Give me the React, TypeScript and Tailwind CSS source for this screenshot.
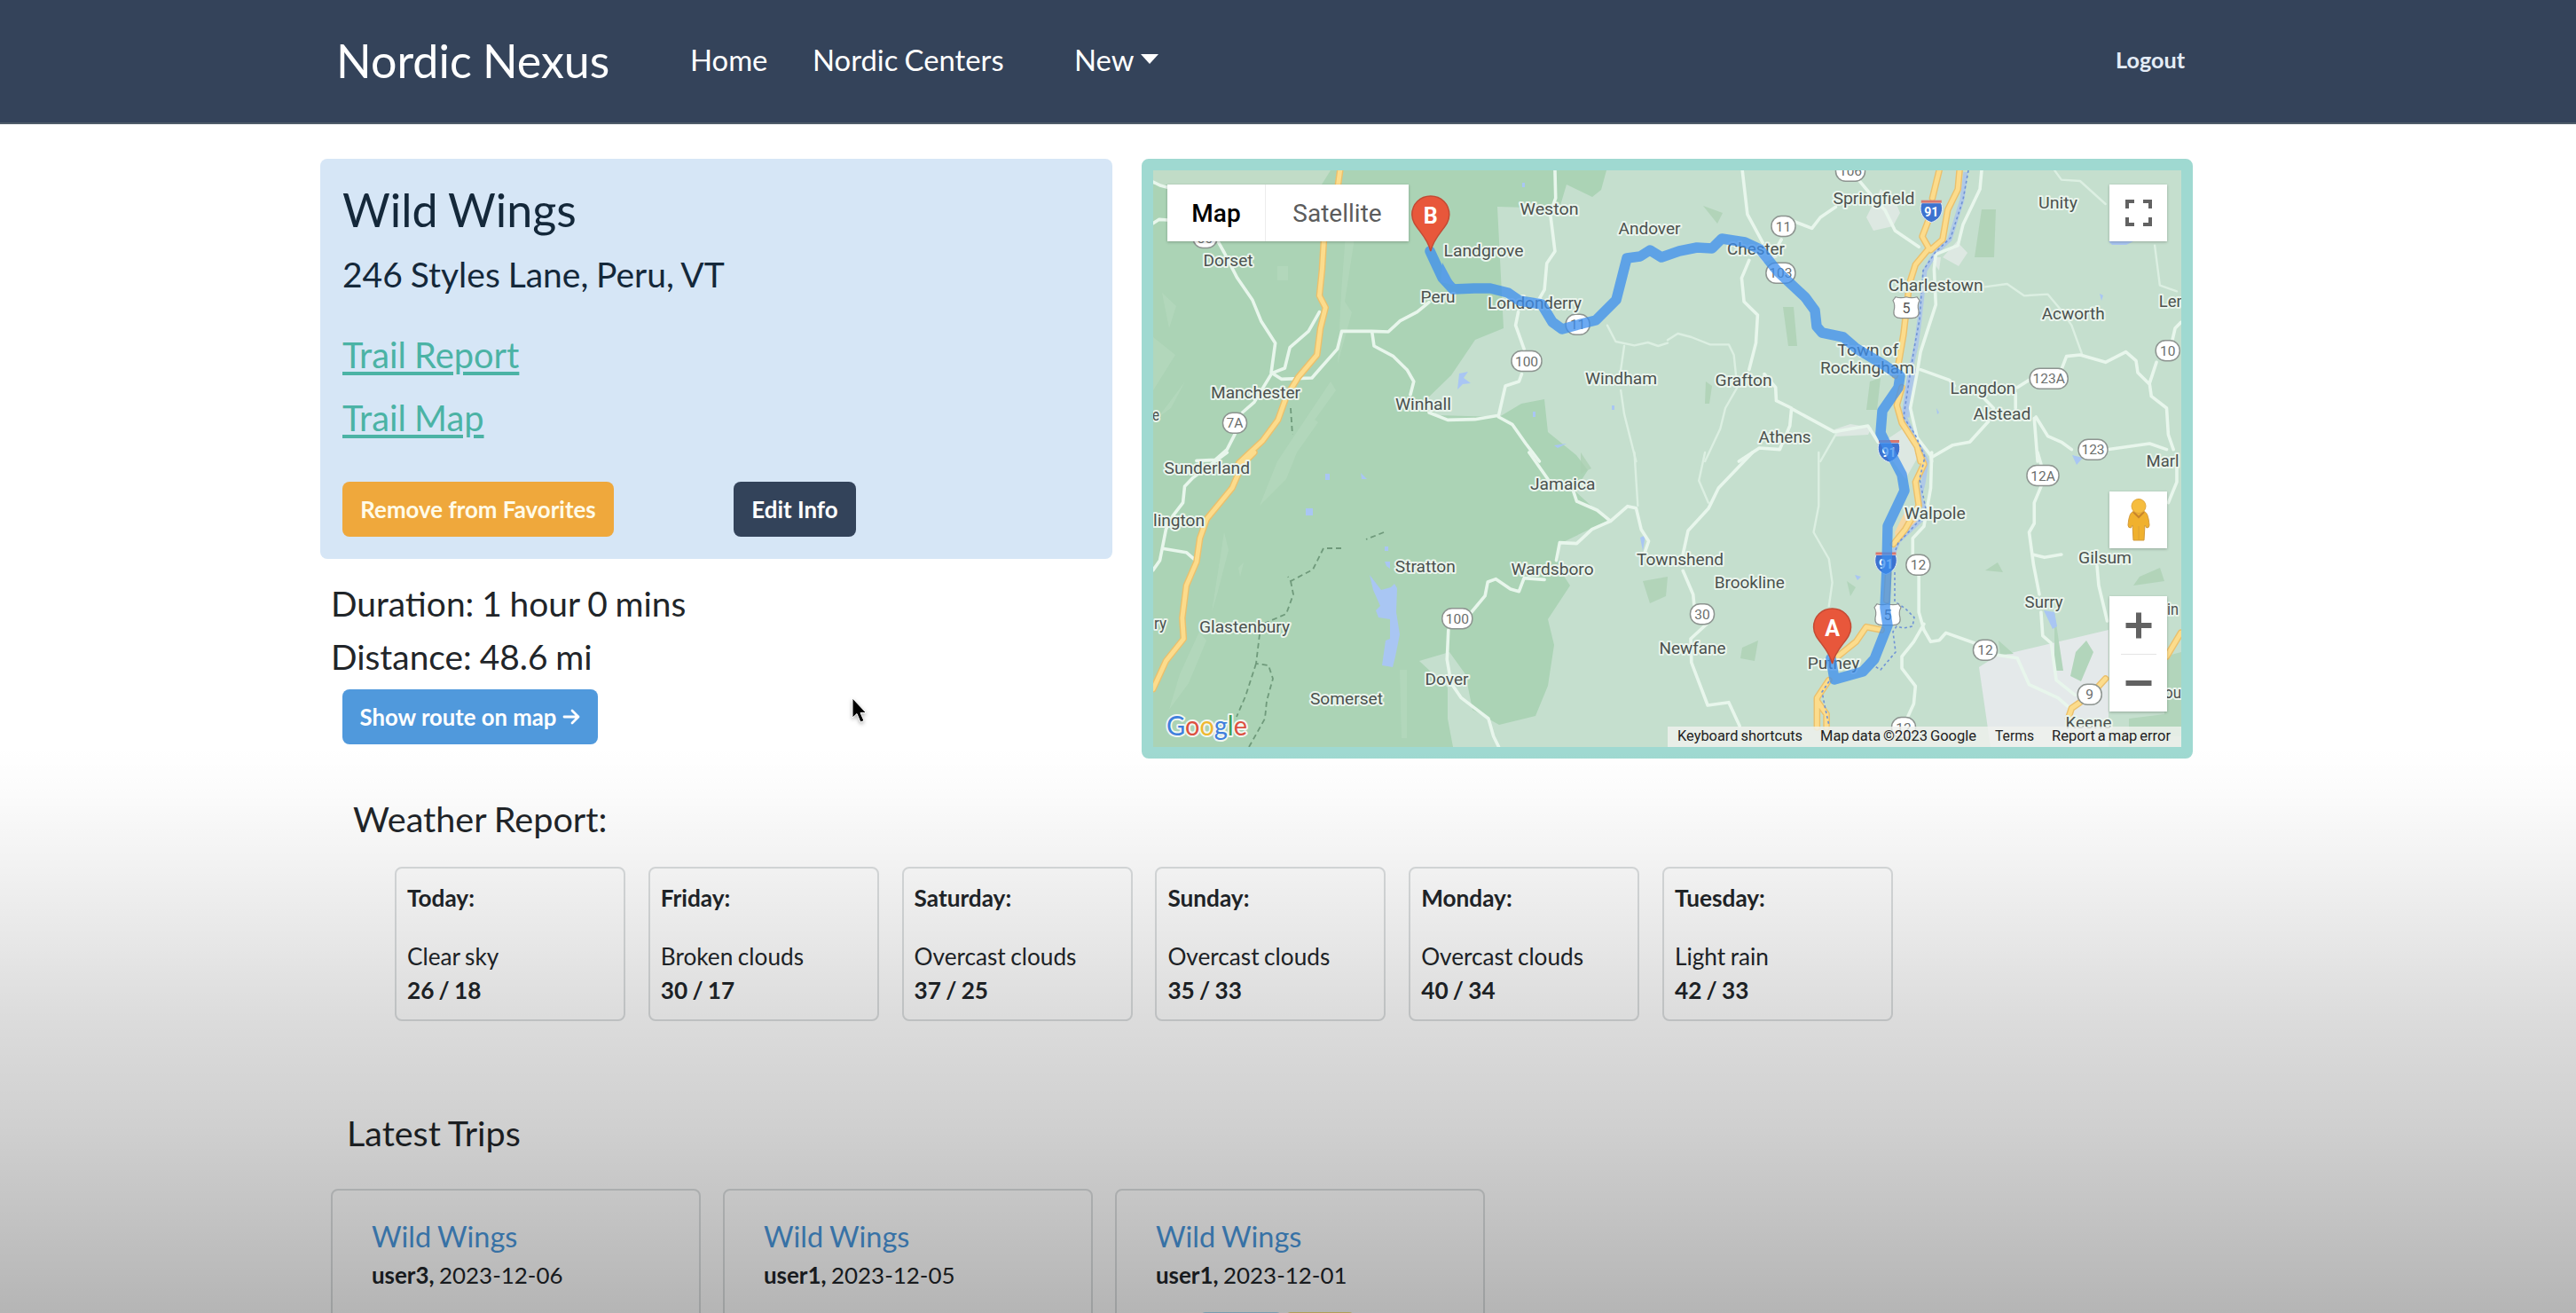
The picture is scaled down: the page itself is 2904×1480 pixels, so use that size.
import type { ReactNode } from "react";

const forecast = [
  ["Today:", "Clear sky", "26 / 18"],
  ["Friday:", "Broken clouds", "30 / 17"],
  ["Saturday:", "Overcast clouds", "37 / 25"],
  ["Sunday:", "Overcast clouds", "35 / 33"],
  ["Monday:", "Overcast clouds", "40 / 34"],
  ["Tuesday:", "Light rain", "42 / 33"],
];

const trips = [
  { user: "user3,", date: "2023-12-06", tags: false },
  { user: "user1,", date: "2023-12-05", tags: false },
  { user: "user1,", date: "2023-12-01", tags: true },
];

// name, left, baseline, width
const towns: [string, number, number, number][] = [
  ["Dorset", 1356.5, 300, 56],
  ["Manchester", 1365, 449, 101],
  ["Winhall", 1573, 461.7, 63],
  ["Peru", 1601.5, 341, 39],
  ["Landgrove", 1627.5, 289, 90],
  ["Londonderry", 1677, 347.7, 106],
  ["Weston", 1713.5, 241.7, 66],
  ["Windham", 1787, 433.3, 81],
  ["Andover", 1824.5, 264.3, 70],
  ["e", 1299, 474, 8],
  ["Springfield", 2066.4, 230, 92],
  ["Chester", 1947, 286.7, 65],
  ["Charlestown", 2128.7, 327.7, 107],
  ["Unity", 2298, 235, 44],
  ["Acworth", 2301.7, 360, 71],
  ["Lem", 2433.7, 346, 36],
  ["Town of", 2071.3, 400.7, 69],
  ["Rockingham", 2052, 420.7, 106],
  ["Grafton", 1933.6, 435, 64],
  ["Athens", 1982.6, 499, 59],
  ["Langdon", 2198.4, 444, 74],
  ["Alstead", 2224.4, 472.7, 65],
  ["Marl", 2419.6, 525.7, 37],
  ["Sunderland", 1312.5, 534, 96.5],
  ["lington", 1300, 592.7, 58],
  ["ry", 1301, 709, 14],
  ["Glastenbury", 1352, 713.3, 102],
  ["Somerset", 1477, 794, 82],
  ["Stratton", 1572.8, 645, 68],
  ["Dover", 1606.5, 771.7, 49],
  ["Wardsboro", 1703.6, 648.3, 93],
  ["Jamaica", 1725, 552.3, 73.5],
  ["Townshend", 1845, 637.3, 98],
  ["Brookline", 1932.7, 662.7, 79],
  ["Newfane", 1870.5, 737.3, 75],
  ["Putney", 2037.7, 754, 58.5],
  ["Walpole", 2146.7, 585, 69],
  ["Gilsum", 2343, 635, 60],
  ["Surry", 2282.6, 685, 43],
  ["Keene", 2328.5, 821, 52],
  ["in", 2443, 692.7, 13],
  ["ou", 2440, 786.7, 19],
];

// number, centre x, centre y, width
const routes: [string, number, number, number][] = [
  ["30", 1358.5, 268, 27],
  ["7A", 1392, 476.7, 27],
  ["100", 1721, 407, 34],
  ["11", 1778.6, 365.7, 27],
  ["106", 2086, 192.7, 33],
  ["11", 2010.5, 255, 27],
  ["103", 2007.4, 307.7, 33],
  ["123A", 2309.7, 426.7, 43],
  ["10", 2443.7, 395.3, 27],
  ["123", 2359.5, 506.7, 33],
  ["100", 1642.8, 697.3, 34],
  ["12A", 2303, 536, 36],
  ["12", 2162.4, 636.7, 27],
  ["30", 1919, 692.3, 27],
  ["12", 2238, 732.7, 27],
  ["9", 2355.7, 782.7, 27],
  ["12", 2146, 820, 27],
];

const credits: [string, number, number][] = [
  ["Keyboard shortcuts", 1891, 141],
  ["Map data ©2023 Google", 2052, 176],
  ["Terms", 2249, 44],
  ["Report a map error", 2313, 134],
];

// The four survey sheets that the map's lines are plotted on.
const sheet = {
  nw: "translate(1280 170) scale(.38265 .33333)",
  ne: "translate(1880 170) scale(.38265 .33333)",
  sw: "translate(1280 510) scale(.38265 .33333)",
  se: "translate(1880 510) scale(.38265 .33333)",
};

const whiteRoads: [keyof typeof sheet, string][] = [
  ["nw", "M52 105L75 118L100 125M52 245L70 232L95 234M245 310L262 345L300 430L345 505L370 575L412 650L400 750L430 772L520 768L545 735L595 670L608 610L695 610L745 612L780 575L830 545L865 512"],
  ["nw", "M542 545L510 610L455 665L440 735L402 752L350 850L315 885M293 958L270 1010L235 1045L180 1048"],
  ["nw", "M1236 66L1238 160L1222 210L1236 340L1212 380L1205 470L1190 500M1128 545L1120 590L1145 670M1138 755L1130 780L1090 795L1070 895L1000 908L920 910L865 885"],
  ["nw", "M697 612L703 660L760 695L800 740L820 780L810 825M1070 900L1110 925L1150 990L1190 1050"],
  ["sw", "M1160 0L1215 90M1290 130L1300 165L1360 195L1400 232L1345 260L1300 308L1250 305L1240 365M1400 232L1450 182L1475 188L1490 260L1512 300L1500 340"],
  ["sw", "M1205 430L1145 425L1130 470L1105 462L1062 428L1038 438L1030 485L990 540M922 600L918 700L930 780L960 830L1040 900L1055 960L1070 995"],
  ["sw", "M270 0L170 85L145 115L140 170L110 215L90 260L78 330L72 365L52 398M80 325L150 338L180 368"],
  ["ne", "M220 66L235 215L280 310M240 370L218 430L225 510L265 555L260 650L240 740M335 300L325 320M375 240L425 262L450 225L495 190"],
  ["ne", "M560 95L600 150L640 200L670 270L740 325M925 66L920 130L870 250L855 320L790 350L785 400L790 520L745 680L735 750L715 870L735 970L775 1030L778 1050"],
  ["ne", "M285 755L318 800L320 845L365 870L360 930L330 1010L270 1005L210 1050M370 875L490 950L590 930L620 985"],
  ["ne", "M745 740L830 775L845 795M1030 800L1065 775M1160 740L1175 695L1215 690L1290 715L1350 680L1380 710L1385 750L1420 790L1425 830L1470 870L1475 960L1490 1010M1420 785L1440 715M1485 650L1495 600L1512 580"],
  ["ne", "M1025 820V870M930 835L960 870M1085 900L1120 965L1160 985L1190 1010M1295 1010L1420 990L1470 1010M1080 905L1090 1050M945 915L890 985L840 995L780 1035"],
  ["se", "M250 0L150 120L120 190L60 265L45 345M45 400L75 480L78 515M115 580L68 630L70 710L118 855L180 845L212 925"],
  ["se", "M778 0L775 120L755 250L722 290L722 345M740 410L740 540L755 600L775 640L800 635L820 610L905 645M755 580L725 640L690 690L690 730L730 790L725 850L705 900"],
  ["se", "M1090 0L1100 40M1100 115L1080 170L1080 240L1065 270L1078 380L1095 480M1100 540L1105 620L1130 645L1145 770L1200 820M970 685L1030 695L1065 785L1150 830L1180 860M1500 40V100L1475 170M1265 385L1270 450L1295 570M1075 345L1110 355L1160 345"],
];

const thinRoads: [keyof typeof sheet, string][] = [
  ["nw", "M1390 590L1415 645L1470 658L1510 648L1540 660L1568 650M1440 660L1430 740M1430 810L1440 890L1475 1050"],
  ["ne", "M0 640L30 618L70 630L125 655L180 655L195 690L205 800L170 870L155 940L110 1050"],
  ["ne", "M1140 66L1160 98L1215 102L1290 180M935 460L1000 450L1050 490L1120 485L1160 540L1190 590L1220 685M1435 320L1450 455L1500 475M500 950L450 1050"],
  ["se", "M445 0L445 180L430 270L475 360L485 440L475 520M110 0L92 95L120 170"],
  ["sw", "M1470 0L1480 180"],
];

const mainRoads: [keyof typeof sheet, string][] = [
  ["nw", "M603 66L597 115M555 305L550 400L542 490L560 530L545 600L535 690L480 765L445 830L420 910L375 980L305 1055"],
  ["sw", "M350 0L315 40L285 120L210 225L190 290L180 370L150 450L138 560L142 630L90 705L52 800"],
  ["ne", "M800 66L780 160M770 230L750 290L770 330L730 385L712 450L695 620L680 720L670 760M860 66L855 130L825 200L810 300L775 335"],
  ["ne", "M690 800L675 860L690 920L735 1000L745 1050"],
  ["se", "M740 0L755 40L730 100L740 180L700 260L665 310M650 400L645 500M630 600L585 590L555 640L490 700M475 770L440 830V930M440 840L468 885V930M1512 610L1470 690M1290 765L1270 790M1215 845L1190 865L1180 900"],
];

function Lines({ data, stroke, width }: { data: [keyof typeof sheet, string][]; stroke: string; width: number }) {
  return (
    <>
      {data.map(([s, d], i) => (
        <g key={i} transform={sheet[s]}>
          <path d={d} fill="none" stroke={stroke} strokeWidth={width} strokeLinejoin="round" strokeLinecap="round" vectorEffect="non-scaling-stroke" />
        </g>
      ))}
    </>
  );
}

function Interstate({ x, y }: { x: number; y: number }) {
  return (
    <g transform={`translate(${x} ${y})`}>
      <path d="M-11 -9H11C14 -2 12 9 0 13C-12 9 -14 -2 -11 -9Z" fill="#3d72cf" stroke="#e9eef6" strokeWidth="1" />
      <path d="M-11.5 -12H11.5V-9H-11.5Z" fill="#d7776f" />
      <text y="6.5" textAnchor="middle" fontSize="14" fontWeight="700" fill="#fff">91</text>
    </g>
  );
}

function UsRoute({ x, y }: { x: number; y: number }) {
  return (
    <g transform={`translate(${x} ${y})`}>
      <path d="M-12 -12Q-6 -10 0 -12Q6 -10 12 -12L15 -8Q12 -3 14 4Q15 12 6 12H-6Q-15 12 -14 4Q-12 -3 -15 -8Z" fill="#fff" stroke="#8b8f8d" strokeWidth="1.2" />
      <text y="6" textAnchor="middle" fontSize="16" fill="#555">5</text>
    </g>
  );
}

function Pin({ x, y, letter }: { x: number; y: number; letter: string }) {
  return (
    <g transform={`translate(${x} ${y})`}>
      <path d="M0 -62C-12 -62 -21 -53 -21 -41C-21 -27 -5 -20 0 0C5 -20 21 -27 21 -41C21 -53 12 -62 0 -62Z" fill="#e8573b" stroke="#c34a34" strokeWidth="1.5" />
      <text y="-31.5" textAnchor="middle" fontSize="25" fontWeight="700" fill="#fff">{letter}</text>
    </g>
  );
}

function RouteMap() {
  return (
    <svg viewBox="1300 192 1159 650" className="block h-[650px] w-[1159px]" fontFamily="Roboto, sans-serif">
      <rect x="1300" y="192" width="1159" height="650" fill="#c5dfce" />
      <path d="M1300 192H1811L1805 214L1795 222L1766 208L1758 235L1688 233L1695 370L1663 383L1636 423L1605 453L1620 468L1690 470L1715 455L1741 450L1745 487L1777 513L1790 530L1775 553L1812 587L1758 613L1757 640L1770 660L1745 698L1752 727L1745 773L1731 807L1690 817L1660 800L1652 760L1634 735L1600 745L1632 775L1632 810L1638 842H1300Z" fill="#abd3b5" />
      {/* valley floor and lighter ridges */}
      <g fill="#b8dac0" opacity=".6">
        <path d="M1300 192H1500L1490 208H1300Z" fill="#d0e2d3" />
        <path d="M1518 250L1528 262L1516 340L1524 352L1508 410L1512 330ZM1500 430L1506 440L1470 490L1450 540L1420 570L1440 520ZM1380 600L1385 620L1372 670L1366 690ZM1352 712L1360 722L1340 770L1318 800L1330 760ZM1300 380L1325 400L1300 440ZM1440 300H1452V316H1440ZM1310 330L1326 345L1318 370ZM1478 470L1486 476L1462 510ZM1396 640L1402 634L1398 650ZM1578 755H1586V832H1580ZM1336 430L1320 460L1306 470Z" />
      </g>
      <g fill="#a9cfb1" opacity=".7">
        <path d="M2234 236H2250L2248 290H2226ZM1852 655L1880 650L1878 672L1860 680ZM2412 650L2435 640L2440 655L2405 660ZM2252 634L2258 645L2238 643ZM1964 730L1982 722L1978 745L1962 742ZM2010 346H2022L2026 390H2016ZM2108 430L2120 426L2116 462H2104ZM1923 430L1930 435L1927 455H1922ZM1782 510L1794 528L1782 534ZM1920 232L1942 240L1936 252Z" />
      </g>
      <path d="M2231 752L2250 740L2377 710V842H2244Z" fill="#e4e9ea" />
      <path d="M2316 690L2326 756H2316ZM2352 722L2360 735L2346 768L2334 762L2340 735ZM2440 740L2459 735V830H2400V810L2440 805ZM2253 722L2270 737L2255 738ZM2082 655L2092 662L2086 672Z" fill="#b2d5bb" />
      <g fill="#dde8e2">
        <path d="M2104 245L2120 213L2136 225L2142 240L2134 255L2112 260ZM2190 290L2206 272L2218 285L2208 300ZM2176 290L2188 290L2186 305ZM2120 500L2150 480L2165 510L2148 540ZM2068 484L2086 478L2110 482L2106 490L2070 492Z" />
        <path d="M1980 285L1990 275L2004 290L1988 296Z" />
      </g>
      <path d="M2136 600L2150 572L2162 588L2138 612Z" fill="#f6d7a1" />
      {/* lakes */}
      <g fill="#a9c6f3">
        <path d="M1548 665L1544 648L1557 665L1568 662L1572 658L1575 663L1574 690L1578 715L1573 740L1570 752L1558 750L1562 722L1567 720V698L1554 696L1551 688L1556 683Z" />
        <path d="M1494 534h5v7h-5zM1534 533l7 7h-6zM1472 573h8v8h-8zM1561 616h4v5h-4zM1561 633h6v8l-4-3zM1645 421l10-2-5 7 8 6-9 1-6 6zM1728 464h3v6h-3zM1752 502l14-2-10 5zM1817 457h3v5h-3zM1716 206h3v5h-3zM1849 606l6-3-3 18zM2304 688l12 2 3 16-5 3zM2336 513l12 3-7 8zM2091 648l7 2-4 4zM2367 331l4 2-2 6zM2183 460l3 5-2 2zM2377 272h28l-8 4h-16z" />
      </g>
      {/* river */}
      <path d="M2216 194L2212 225L2198 270L2182 285L2170 305L2164 360L2160 390L2153 420L2147 470L2160 495L2172 520L2168 545L2164 560L2172 580L2140 610L2134 625" fill="none" stroke="#a9c3ee" strokeWidth="5" opacity=".8" />
      <path d="M2156 415L2148 470" fill="none" stroke="#a9c3ee" strokeWidth="9" opacity=".8" />
      {/* hiking trails */}
      <path d="M1560 600L1540 608M1512 618L1492 618L1480 642L1455 655L1452 650M1455 655L1458 670L1450 692L1420 705M1420 715L1416 748L1430 750L1435 765L1428 790L1426 810L1408 842M1416 748L1404 785L1394 808M1455 460L1457 490" fill="none" stroke="#6f9a7b" strokeWidth="1.8" strokeDasharray="6 4" />
      <Lines data={thinRoads} stroke="#dcefe2" width={2.4} />
      <Lines data={whiteRoads} stroke="#e8f6ec" width={3.6} />
      <Lines data={mainRoads} stroke="#ebc06c" width={7.6} />
      <Lines data={mainRoads} stroke="#fcdc8c" width={4.8} />
      <path d="M2219 192L2213 225L2199 268L2182 284L2168 305L2164 360L2158 392L2152 430L2146 470L2159 490L2170 515L2164 540L2172 578L2140 612L2134 628M2136 645V678L2148 686L2158 696L2156 706L2146 708L2138 706L2134 712L2137 735L2120 755L2112 750M2062 768L2054 780L2058 800L2062 818" fill="none" stroke="#6f93d6" strokeWidth="1.6" strokeDasharray="3 3" />

      {routes.map(([n, x, y, w], i) => (
        <g key={i}>
          <rect x={x - w / 2} y={y - 11.5} width={w} height="23" rx="11" fill="#fff" stroke="#8d9490" strokeWidth="1.5" />
          <text x={x} y={y + 5.5} textAnchor="middle" fontSize="15.5" fill="#6a6e6c">{n}</text>
        </g>
      ))}
      <UsRoute x={2149} y={346.7} />
      <UsRoute x={2128} y={692.7} />
      <Interstate x={2177.3} y={237.7} />
      <Interstate x={2129.5} y={508} />
      <Interstate x={2126} y={634.5} />

      {towns.map(([n, x, y, w]) => (
        <text key={n} x={x} y={y} fontSize="18.5" textLength={w} lengthAdjust="spacingAndGlyphs" fill="#4b514e" stroke="#e9f4ec" strokeWidth="4" strokeLinejoin="round" className="[paint-order:stroke]">{n}</text>
      ))}

      <path
        d="M1612 283L1618 296L1626 313L1638 326L1662 325L1680 325L1700 330L1713 339L1738 343L1750 363L1761 371L1779 366L1799 361L1812 348L1822 338L1834 291L1849 289L1860 282L1873 290L1893 283L1913 279L1930 280L1941 269L1967 273L1984 281L2004 306L2035 335L2046 350L2048 368L2054 375L2078 380L2093 393L2125 412L2142 424L2140 437L2122 463L2120 488L2132 512L2144 535L2147 553L2128 593L2127 640L2125 685L2128 705L2113 743L2100 757L2068 766L2064 742"
        fill="none" stroke="#3b8eee" strokeWidth="11.5" strokeLinejoin="round" strokeLinecap="round" opacity=".75"
      />
      <path d="M1626 296L1640 322L1624 318Z" fill="#5a9fe6" />
      <Pin x={1612.8} y={283} letter="B" />
      <Pin x={2065.6} y={748} letter="A" />

      <rect x="1880" y="819" width="579" height="23" fill="#eff2ee" opacity=".82" />
      {credits.map(([t, x, w]) => (
        <text key={t} x={x} y="835" fontSize="16" textLength={w} lengthAdjust="spacingAndGlyphs" fill="#222">{t}</text>
      ))}
      <text x="1315" y="829" fontSize="31" fontFamily="Lato, sans-serif" fontWeight="400" textLength="91" lengthAdjust="spacingAndGlyphs" stroke="#f2f7f3" strokeWidth="4" strokeLinejoin="round" className="[paint-order:stroke]">
        <tspan fill="#3f7fdd">G</tspan><tspan fill="#dd5040">o</tspan><tspan fill="#efb830">o</tspan><tspan fill="#3f7fdd">g</tspan><tspan fill="#3fa055">l</tspan><tspan fill="#dd5040">e</tspan>
      </text>
    </svg>
  );
}

function MapButton({ children, className }: { children: ReactNode; className: string }) {
  return (
    <div className={`flex w-[65px] flex-col items-center justify-center bg-white shadow-[0_1px_3px_rgba(0,0,0,0.25)] ${className}`}>{children}</div>
  );
}

export default function App() {
  return (
    <div className="relative h-[1480px] w-[2904px] overflow-hidden bg-white font-[Lato,sans-serif] text-[#212529] [word-spacing:-0.07em]">
      <nav className="flex h-[140px] items-center border-b-2 border-[#4f5c69] bg-[#34435a] pb-[2px] pl-[379px] text-[32.8px] text-white">
        <span className="w-[399px] text-[52px]">Nordic Nexus</span>
        <span className="w-[138px]">Home</span>
        <span className="w-[295px]">Nordic Centers</span>
        <span className="flex items-center gap-[8px]">
          New
          <svg viewBox="0 0 20 11" className="mb-[4px] h-[11px] w-[20px]"><path d="M0 0H20L10 11Z" fill="#fff" /></svg>
        </span>
        <span className="mr-[441px] ml-auto text-[25.2px] font-bold text-[#e4ecf6]">Logout</span>
      </nav>

      <main className="pt-[39px] pl-[361px]">
        <section className="flex gap-[33px]">
          <div className="w-[893px]">
            <div className="h-[451px] rounded-[8px] bg-[#d6e6f6] pt-[26px] pl-[25px] text-[#14283a]">
              <h1 className="text-[52px] leading-[62px]">Wild Wings</h1>
              <p className="mt-[18px] text-[39px] leading-[48px]">246 Styles Lane, Peru, VT</p>
              <a className="mt-[43px] block text-[39.8px] leading-[48px] text-[#4bb3a5] underline decoration-[4px] underline-offset-[4px]">Trail Report</a>
              <a className="mt-[23px] block text-[39.8px] leading-[48px] text-[#4bb3a5] underline decoration-[4px] underline-offset-[4px]">Trail Map</a>
              <div className="mt-[48px] flex gap-[135px] text-[25.9px] font-bold text-white">
                <button className="h-[62px] w-[306px] rounded-[8px] bg-[#efa83c] text-[#fffbe8]">Remove from Favorites</button>
                <button className="h-[62px] w-[138px] rounded-[8px] bg-[#33435a]">Edit Info</button>
              </div>
            </div>
            <div className="pt-[20px] pl-[12px] text-[38.9px] leading-[60px]">
              <p>Duration: 1 hour 0 mins</p>
              <p>Distance: 48.6 mi</p>
              <button className="mt-[7px] ml-[13px] flex h-[62px] w-[288px] items-center justify-center gap-[7px] rounded-[8px] bg-[#5099dc] text-[25.7px] font-bold text-white">
                Show route on map
                <svg viewBox="0 0 20 20" className="h-[20px] w-[20px]" fill="none" stroke="#fff" strokeWidth="2.8" strokeLinecap="round" strokeLinejoin="round"><path d="M2 10H18M11 3L18 10L11 17" /></svg>
              </button>
            </div>
          </div>

          <div className="relative h-[676px] w-[1185px] rounded-[8px] border-13 border-[#9fd9d1]">
            <RouteMap />
            <div className="absolute top-[16px] left-[16px] flex h-[64px] w-[272px] bg-white font-[Roboto,sans-serif] text-[28px] shadow-[0_1px_3px_rgba(0,0,0,0.25)]">
              <span className="flex w-[111px] items-center justify-center border-r border-[#ececec] pt-[2px] font-medium text-black">Map</span>
              <span className="flex flex-1 items-center justify-center pt-[2px] text-[#5c5c5c]">Satellite</span>
            </div>
            <div className="absolute top-[16px] right-[16px] flex flex-col">
              <MapButton className="h-[64px]">
                <svg viewBox="0 0 30 30" className="h-[30px] w-[30px]" fill="none" stroke="#626262" strokeWidth="4"><path d="M2 10V2H10M20 2H28V10M28 20V28H20M10 28H2V20" /></svg>
              </MapButton>
              <MapButton className="mt-[282px] h-[64px]">
                <svg viewBox="0 0 28 50" className="h-[50px] w-[28px]">
                  <path d="M9 15H19C23 16 25 20 26 31Q26 34 23 34L21 31L20 48H8L7 31L5 34Q2 34 2 31C3 20 5 16 9 15Z" fill="#f0b12e" stroke="#d39a3a" strokeWidth="1" />
                  <path d="M8 16L14 22L20 16" fill="none" stroke="#c6842c" strokeWidth="2" />
                  <path d="M14 32V48" stroke="#dca236" strokeWidth="1" />
                  <circle cx="14" cy="9.5" r="8" fill="#f6bd3e" stroke="#e0a63a" strokeWidth="1" />
                </svg>
              </MapButton>
              <MapButton className="mt-[54px] h-[130px]">
                <span className="flex h-[64px] items-center"><svg viewBox="0 0 30 30" className="h-[30px] w-[30px]" stroke="#626262" strokeWidth="6"><path d="M0.5 15H29.5M15 0.5V29.5" /></svg></span>
                <span className="h-px w-[40px] bg-[#e4e4e4]" />
                <span className="flex h-[64px] items-center"><svg viewBox="0 0 30 30" className="h-[30px] w-[30px]" stroke="#626262" strokeWidth="6"><path d="M0.5 15H29.5" /></svg></span>
              </MapButton>
            </div>
          </div>
        </section>

        <section className="pt-[38px]">
          <h2 className="pl-[37px] text-[39.6px] leading-[60px]">Weather Report:</h2>
          <div className="mt-[24px] ml-[84px] flex gap-[25.8px]">
            {forecast.map(([day, sky, temp]) => (
              <div key={day} className="h-[174px] w-[260px] rounded-[8px] border-2 border-[#dcdfe0] pt-[14px] pl-[12px] text-[26.2px] leading-[38px]">
                <p className="font-bold">{day}</p>
                <p className="mt-[28px]">{sky}</p>
                <p className="font-bold">{temp}</p>
              </div>
            ))}
          </div>
        </section>

        <section className="pt-[96px] pl-[12px]">
          <h2 className="pl-[18px] text-[39.5px] leading-[60px]">Latest Trips</h2>
          <div className="mt-[33px] flex gap-[25px]">
            {trips.map((t) => (
              <div key={t.date} className="h-[260px] w-[417px] rounded-[8px] border-2 border-[#dcdfe0] pt-[32px] pl-[44px] text-[25.9px] leading-[40px]">
                <a className="block text-[32.5px] text-[#4a97dc]">Wild Wings</a>
                <p className="mt-[3px]"><b>{t.user}</b> {t.date}</p>
                {t.tags && (
                  <div className="mt-[22px] ml-[50px] flex gap-[4px]">
                    <span className="h-[34px] w-[92px] rounded-[6px] bg-[#a9dcf5]" />
                    <span className="h-[34px] w-[78px] rounded-[6px] bg-[#f7e07a]" />
                  </div>
                )}
              </div>
            ))}
          </div>
        </section>
      </main>

      <div className="pointer-events-none absolute inset-x-0 bottom-0 h-[640px] bg-[linear-gradient(to_bottom,rgba(0,0,0,0)_0%,rgba(0,0,0,0.012)_7%,rgba(0,0,0,0.04)_17%,rgba(0,0,0,0.085)_32%,rgba(0,0,0,0.14)_49%,rgba(0,0,0,0.19)_68%,rgba(0,0,0,0.24)_84%,rgba(0,0,0,0.29)_100%)]" />
      <svg viewBox="0 0 18 30" className="absolute top-[786px] left-[960px] h-[30px] w-[18px] drop-shadow-[0_2px_2px_rgba(0,0,0,0.3)]">
        <path d="M1 1V23L6 18.5L10 28L14 26.5L10 17.5H16.5Z" fill="#000" stroke="#fff" strokeWidth="1" />
      </svg>
    </div>
  );
}
